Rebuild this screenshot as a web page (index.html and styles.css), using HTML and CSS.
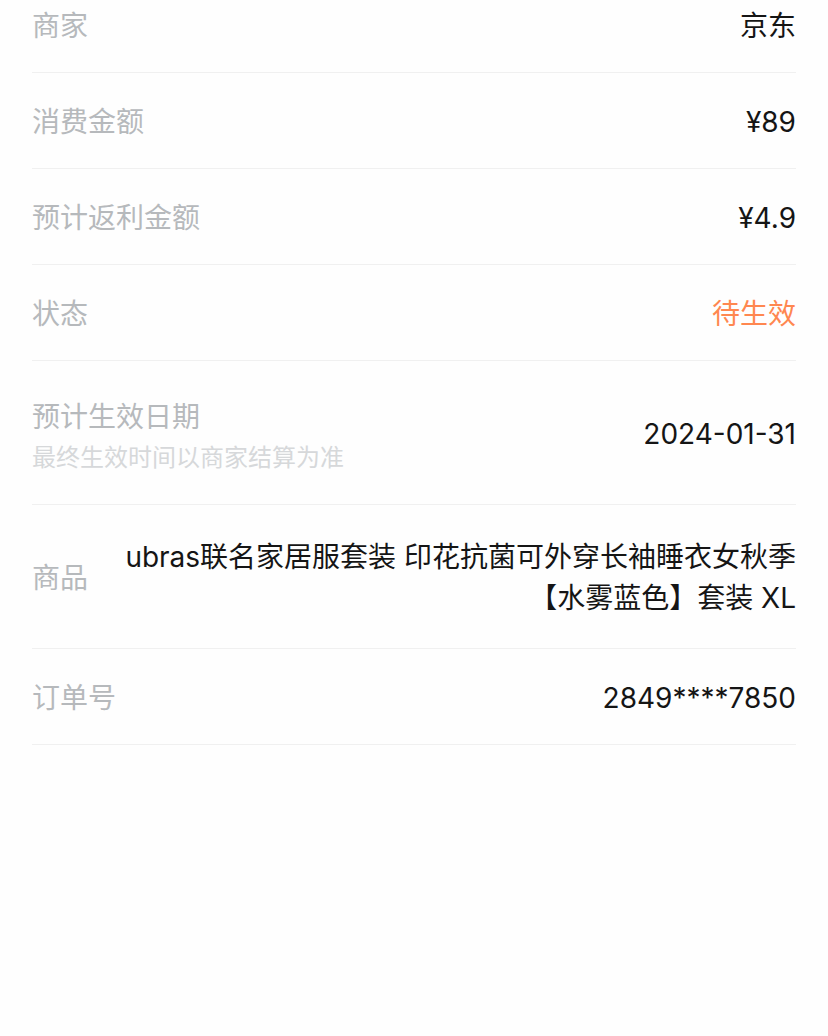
FILE: index.html
```html
<!DOCTYPE html>
<html lang="zh-CN">
<head>
    <meta charset="UTF-8">
    <meta name="viewport" content="width=device-width, initial-scale=1.0">
    <title>订单详情</title>
    <link rel="stylesheet" href="styles.css">
</head>
<body>
    <div class="detail-list">
        <div class="row">
            <div class="label">商家</div>
            <div class="value">京东</div>
        </div>
        <div class="row">
            <div class="label">消费金额</div>
            <div class="value">¥89</div>
        </div>
        <div class="row">
            <div class="label">预计返利金额</div>
            <div class="value">¥4.9</div>
        </div>
        <div class="row">
            <div class="label">状态</div>
            <div class="value pending">待生效</div>
        </div>
        <div class="row tall">
            <div class="label with-sub">
                预计生效日期
                <div class="sub">最终生效时间以商家结算为准</div>
            </div>
            <div class="value">2024-01-31</div>
        </div>
        <div class="row tall">
            <div class="label">商品</div>
            <div class="value goods">ubras联名家居服套装 印花抗菌可外穿长袖睡衣女秋季【水雾蓝色】套装 XL</div>
        </div>
        <div class="row">
            <div class="label">订单号</div>
            <div class="value">2849****7850</div>
        </div>
    </div>
</body>
</html>
```

FILE: styles.css
```css
body {
    margin: 0;
    background: #fefefe;
    font-family: "Inter", "Noto Sans CJK SC", sans-serif;
}
.detail-list {
    margin-top: -23px;
    padding: 0 32px;
}
.row {
    display: flex;
    align-items: center;
    justify-content: space-between;
    height: 95px;
    border-bottom: 1px solid #f0f0f0;
}
.row.tall {
    height: 143px;
}
.label {
    font-size: 28px;
    color: #b6b9bc;
    line-height: 40px;
    padding-top: 3px;
    flex-shrink: 0;
}
.label.with-sub {
    padding-top: 6px;
}
.sub {
    font-size: 24px;
    color: #d6d8da;
    line-height: 34px;
    margin-top: 4px;
}
.value {
    font-size: 28px;
    color: #151515;
    text-align: right;
    line-height: 41px;
    padding-top: 3px;
}
.pending {
    color: #ff8750;
}
.goods {
    margin-left: 32px;
    max-width: 680px;
}
```
